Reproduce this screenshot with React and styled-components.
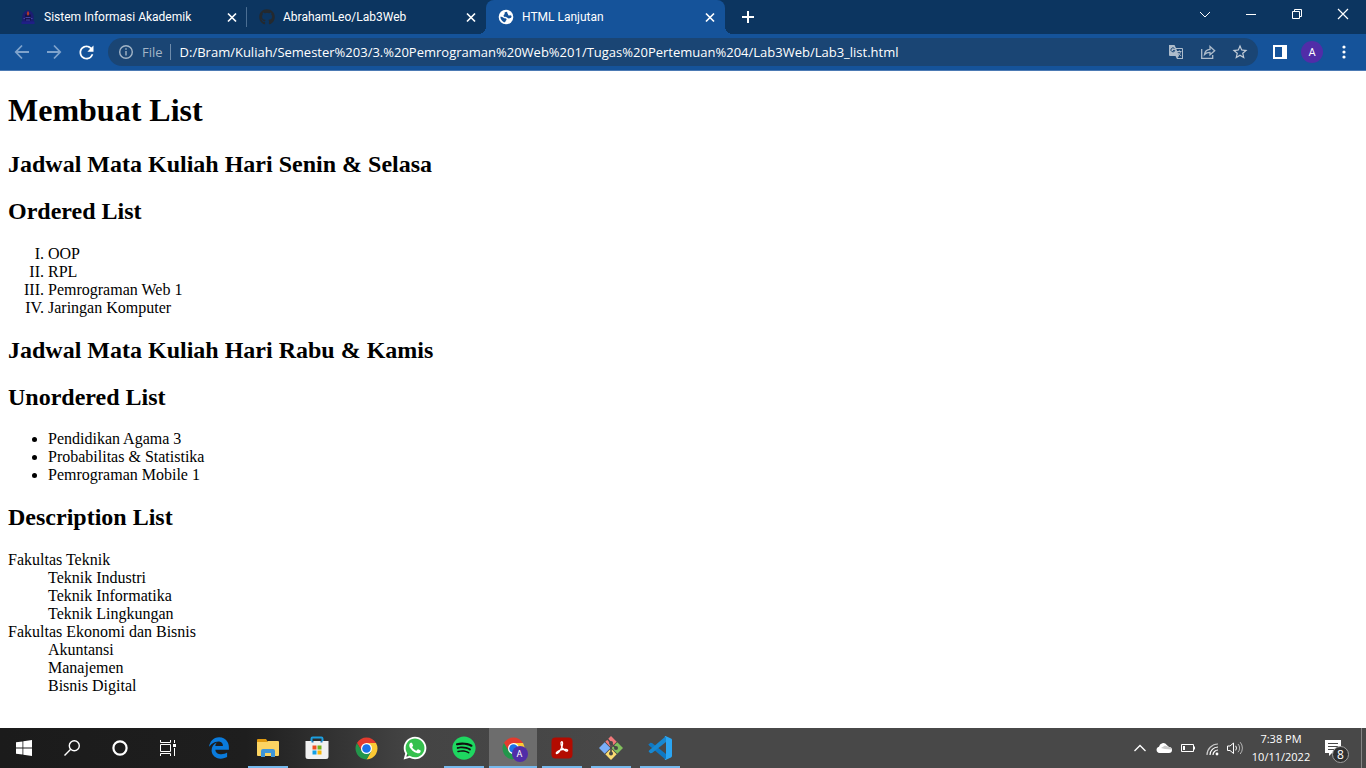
import React from "react";
import styled, { createGlobalStyle, css } from "styled-components";
import { FaGithub, FaSpotify, FaWhatsapp, FaEdgeLegacy } from "react-icons/fa6";
import { MdRefresh, MdStarBorder } from "react-icons/md";

const UI_FONT = `"Open Sans", "Noto Sans", sans-serif`;
const TAB_FONT = `Roboto, "Open Sans", sans-serif`;
const PAGE_FONT = `"Liberation Serif", "Times New Roman", serif`;

const GlobalStyle = createGlobalStyle`
  *, *::before, *::after { box-sizing: border-box; }
  body { margin: 0; background: #fff; }
  button { font: inherit; color: inherit; background: none; border: 0; padding: 0; }
  svg { display: block; flex: none; }
`;

const Screen = styled.div`
  display: flex;
  flex-direction: column;
  min-height: 100vh;
  font-family: ${UI_FONT};
`;

/* ---------- tab strip ---------- */

const TabStrip = styled.header`
  display: flex;
  align-items: flex-start;
  height: 34px;
  padding-left: 8px;
  background: #0c3560;
  color: #fff;
`;

const TabList = styled.nav`
  display: flex;
  height: 34px;
`;

const Tab = styled.div`
  display: flex;
  align-items: center;
  width: 239px;
  height: 34px;
  padding: 0 7px 0 12px;
  border-radius: 8px 8px 0 0;
  ${(p) =>
    p.$divider &&
    css`
      background: linear-gradient(#4b6e93, #4b6e93) right center / 1px 20px no-repeat;
    `}
  ${(p) =>
    p.$active &&
    css`
      position: relative;
      background: #15539a;
      &::before,
      &::after {
        content: "";
        position: absolute;
        bottom: 0;
        width: 8px;
        height: 8px;
      }
      &::before {
        right: 100%;
        background: radial-gradient(circle at 0 0, transparent 8px, #15539a 8px);
      }
      &::after {
        left: 100%;
        background: radial-gradient(circle at 100% 0, transparent 8px, #15539a 8px);
      }
    `}
`;

const TabTitle = styled.button`
  display: flex;
  flex: 1;
  align-items: center;
  gap: 8px;
  font-family: ${TAB_FONT};
  font-size: 12px;
  line-height: 16px;
  white-space: nowrap;
`;

const IconButton = styled.button`
  display: flex;
  flex: none;
  align-items: center;
  justify-content: center;
  width: ${(p) => p.$w || 16}px;
  height: ${(p) => p.$h || 16}px;
  color: ${(p) => p.$color || "#fff"};
`;

const NewTab = styled(IconButton)`
  margin-left: 15px;
`;

const WindowControls = styled.div`
  display: flex;
  margin-left: auto;
`;

/* ---------- toolbar ---------- */

const Toolbar = styled.div`
  display: flex;
  align-items: center;
  height: 37px;
  padding: 0 6px;
  border-bottom: 1px solid #4c7ab4;
  background: #15539a;
`;

const Omnibox = styled.form`
  display: flex;
  flex: 1;
  align-items: center;
  height: 28px;
  margin: 0 6px;
  padding: 0 2px 0 10px;
  border-radius: 14px;
  background: #1a4574;
`;

const Scheme = styled.label`
  margin-left: 8px;
  padding-right: 7px;
  border-right: 1px solid #6f8cab;
  color: #a3b5c7;
  font-size: 13px;
  line-height: 16px;
`;

const Address = styled.input`
  flex: 1;
  min-width: 0;
  margin: 0;
  padding: 0 0 0 9px;
  border: 0;
  outline: 0;
  background: transparent;
  color: #fff;
  font-family: inherit;
  font-size: 13px;
  line-height: 20px;
`;

const Avatar = styled.span`
  display: flex;
  align-items: center;
  justify-content: center;
  width: 22px;
  height: 22px;
  border-radius: 50%;
  background: #512da8;
  color: #fff;
  font-family: Roboto, sans-serif;
  font-size: 11px;
`;

/* ---------- document ---------- */

const Page = styled.main`
  flex: 1;
  padding: 0 8px 16px;
  color: #000;
  font-family: ${PAGE_FONT};
  font-size: 16px;
`;

const Title = styled.h1`
  font-size: 32px;
`;

const Heading = styled.h2`
  font-size: 24px;
`;

const Ordered = styled.ol`
  margin: 16px 0;
  padding-left: 40px;
  list-style-type: upper-roman;
`;

const Unordered = styled.ul`
  margin: 16px 0;
  padding-left: 40px;
`;

const Descriptions = styled.dl`
  margin: 16px 0;
`;

const Detail = styled.dd`
  margin-left: 40px;
`;

/* ---------- taskbar ---------- */

const Taskbar = styled.footer`
  display: flex;
  align-items: stretch;
  height: 40px;
  background: linear-gradient(90deg, #1b1b1b 0, #1e1e1e 18%, #444 30%, #484848 45%, #484848 100%);
  color: #fff;
`;

const System = styled.div`
  display: flex;
  margin-right: 3px;
`;

const Apps = styled.div`
  display: flex;
  gap: 1px;
`;

const TaskButton = styled.button`
  display: flex;
  align-items: center;
  justify-content: center;
  width: 48px;
  height: 40px;
  ${(p) =>
    p.$running &&
    css`
      background: linear-gradient(#76b9ed, #76b9ed) center bottom / 40px 2px no-repeat;
    `}
  ${(p) =>
    p.$active &&
    css`
      background: linear-gradient(#76b9ed, #76b9ed) center bottom / 48px 2px no-repeat, #6d6d6d;
    `}
`;

const Tray = styled.div`
  display: flex;
  align-items: center;
  margin-left: auto;
`;

const Clock = styled.time`
  width: 62px;
  margin: 0 9px 0 4px;
  font-size: 11px;
  line-height: 18px;
  text-align: center;
`;

const ShowDesktop = styled.button`
  width: 5px;
  height: 40px;
  margin-left: 16px;
  border-left: 1px solid #858585;
`;

const Badged = styled.span`
  position: relative;
  display: flex;
`;

const Count = styled.span`
  position: absolute;
  top: 6px;
  left: 7px;
  width: 17px;
  height: 17px;
  border: 1px solid #a0a0a0;
  border-radius: 50%;
  background: #303030;
  font-size: 12px;
  line-height: 15px;
  text-align: center;
`;

const MiniAvatar = styled(Avatar)`
  position: absolute;
  top: 9px;
  left: 10px;
  width: 16px;
  height: 16px;
  font-size: 9px;
`;

/* ---------- drawings ---------- */

const Stroke = ({ w = 16, h = 16, sw = 1, d, children, ...rest }) => (
  <svg width={w} height={h} viewBox={`0 0 ${w} ${h}`} fill="none" stroke="currentColor" strokeWidth={sw} {...rest}>
    {d && <path d={d} />}
    {children}
  </svg>
);

const CloseX = () => <Stroke sw={1.7} d="M4 4.500l8 8M12 4.500l-8 8" />;

const CampusIcon = () => (
  <svg width="16" height="16" viewBox="0 0 16 16">
    <path d="M8 1C4.500 2 2.300 4.500 2.300 8v6h11.400V8C13.700 4.500 11.500 2 8 1Z" fill="#1c1c72" />
    <path d="M5 5.500h6v6H5z" fill="#14144e" />
    <path d="M1.500 12.500h13V15h-13z" fill="#1f1f86" />
    <path d="M7.400 2.500h1.300l.6 2.500-.8 1.500h-1L6.800 5z" fill="#b23a2a" />
    <path d="M5.500 8.500h5M6 11h4M3.500 9.500h1.500M11 9.500h1.500" stroke="#4444a4" />
  </svg>
);

const GlobeIcon = () => (
  <svg width="16" height="16" viewBox="0 0 16 16">
    <circle cx="8" cy="8" r="7.300" fill="#fff" />
    <path d="M9 2.700C6.500 3 5.800 4 7 5c-1.300.6-1.900 1.500-1 2.400 1 .9 2.600.3 3.400 1.300.6.900 2 .900 2.800.4.900-.3 1.400-1 1.300-2.200-.5-.7-1.300-.9-1.900-.5-.8.200-1.500-.2-1.500-1 0-.9-1.200-.8-1-1.500.2-.5.400-.9-.1-1.200z" fill="#15539a" />
    <path d="M2.300 7.800c1.400 0 2.300.2 3.200.9.900.8 2.400.2 3 1.300.4 1.100-.8 1.300-1 2.200-.100.600-.700 1.200-1.500 1-2-.9-3.500-2.900-3.700-5.400z" fill="#15539a" />
  </svg>
);

const ChromeLogo = () => (
  <svg width="23" height="23" viewBox="1 1 46 46">
    <path d="M4.950 13A22 22 0 0 1 43.050 13H24v11l-9.500 5.500Z" fill="#e33b2e" />
    <path d="M43.050 13A22 22 0 0 1 24 46l9.500-16.500L24 24V13Z" fill="#fcc934" />
    <path d="M24 46A22 22 0 0 1 4.950 13l9.550 16.500L24 24l9.500 5.500Z" fill="#23964b" />
    <circle cx="24" cy="24" r="11" fill="#fff" />
    <circle cx="24" cy="24" r="8.600" fill="#1a73e8" />
  </svg>
);

const WindowsLogo = () => (
  <svg width="16" height="16" viewBox="0 0 16 16" fill="#fff">
    <path d="M0 2.300L6.500 1.400V7.500H0zM7.300 1.300L16 0v7.500H7.300zM0 8.400h6.500v6.200L0 13.700zM7.300 8.400H16V16l-8.700-1.300z" />
  </svg>
);

const FolderLogo = () => (
  <svg width="22" height="20" viewBox="0 0 22 20">
    <path d="M0 2a1 1 0 0 1 1-1h8l2 3H0z" fill="#e09a10" />
    <path d="M0 4h10l1-1h10a1 1 0 0 1 1 1v13a1 1 0 0 1-1 1H1a1 1 0 0 1-1-1z" fill="#fcd462" />
    <path d="M4 19v-6a2 2 0 0 1 2-2h10a2 2 0 0 1 2 2v6h-4v-4H8v4z" fill="#3f96d9" />
  </svg>
);

const StoreLogo = () => (
  <svg width="24" height="24" viewBox="0 0 24 24">
    <path d="M6.500 6V2.700C6.500 2 7 1.600 7.600 1.600h8.800c.6 0 1.100.4 1.100 1.100V6" fill="none" stroke="#1c9fe0" strokeWidth="2" />
    <path d="M.5 5h23v15.500a2.500 2.500 0 0 1-2.500 2.500H3A2.500 2.500 0 0 1 .5 20.500z" fill="#f1f1f1" />
    <path d="M6.500 5h2v1.500h-2zM15.500 5h2v1.500h-2z" fill="#1c7fc0" />
    <path d="M7.500 9.500h4v4h-4z" fill="#f04e1f" />
    <path d="M12.500 9.500h4v4h-4z" fill="#72b21b" />
    <path d="M7.500 14.500h4v4h-4z" fill="#12a0e6" />
    <path d="M12.500 14.500h4v4h-4z" fill="#f8b509" />
  </svg>
);

const WhatsAppLogo = () => (
  <svg width="26" height="26" viewBox="0 0 26 26">
    <circle cx="13.300" cy="12.800" r="10.500" fill="#35c04d" />
    <FaWhatsapp size={26} color="#fff" />
  </svg>
);

const SpotifyLogo = () => (
  <svg width="24" height="24" viewBox="0 0 24 24">
    <circle cx="12" cy="12" r="10" fill="#101010" />
    <FaSpotify size={24} color="#1ed760" />
  </svg>
);

const AcrobatLogo = () => (
  <svg width="22" height="22" viewBox="0 0 22 22">
    <rect x="0.500" y="0.500" width="21" height="21" rx="4" fill="#b30b00" />
    <path
      d="M10.500 4.800c1.700-.6 1.200 4-.4 7-1.300 2.500-3.500 5.200-4.600 4.600-1.200-.9 2.200-3 5.600-3.700 3-.6 5.700-.4 5.500.9-.3 1.400-3.800-.4-5.300-2.700-1.200-2-1.900-5.700-.8-6.100z"
      fill="none"
      stroke="#fff"
      strokeWidth="1.300"
    />
  </svg>
);

const GitLogo = () => (
  <svg width="24" height="24" viewBox="0 0 24 24">
    <path d="M12 0l5.700 5.700L12 11.400 6.300 5.700z" fill="#f0787a" />
    <path d="M18.300 6.300L24 12l-5.700 5.700-5.700-5.700z" fill="#82c05d" />
    <path d="M12 12.600l5.700 5.700L12 24l-5.700-5.700z" fill="#fbdc72" />
    <path d="M5.700 6.300l5.700 5.700-5.700 5.700L0 12z" fill="#7aaef8" />
    <path d="M8.500 3l3.500 4v11M12 7.500l5 4.500" fill="none" stroke="#474747" strokeWidth="1.600" />
    <circle cx="12" cy="7" r="2" fill="#474747" />
    <circle cx="17" cy="12" r="2" fill="#474747" />
    <circle cx="12" cy="17.500" r="2" fill="#474747" />
  </svg>
);

const CodeLogo = () => (
  <svg width="24" height="24" viewBox="0 0 24 24">
    <path d="M0.800 8.200L2.300 6.800 4 6.900 18 18v6L0.800 9.300z" fill="#0f79c4" />
    <path d="M0.800 15.800l1.500 1.400L4 17.100 18 6V0L0.800 14.700z" fill="#1788d1" />
    <path d="M17.500 0L23 2.600a1.500 1.500 0 0 1 1 1.400v16a1.500 1.500 0 0 1-1 1.400L17.500 24c-.5.200-.8-.1-.8-.4l1.300-1.200V1.600L16.700.4c0-.3.3-.6.8-.4z" fill="#2aa5f2" />
  </svg>
);

const tabs = [
  { title: "Sistem Informasi Akademik", icon: <CampusIcon />, divider: true },
  { title: "AbrahamLeo/Lab3Web", icon: <FaGithub size={16} color="#24292e" /> },
  { title: "HTML Lanjutan", icon: <GlobeIcon />, active: true },
];

const apps = [
  { name: "Microsoft Edge", icon: <FaEdgeLegacy size={22} color="#0a7bdc" /> },
  { name: "File Explorer", icon: <FolderLogo />, running: true },
  { name: "Microsoft Store", icon: <StoreLogo /> },
  { name: "Google Chrome", icon: <ChromeLogo /> },
  { name: "WhatsApp", icon: <WhatsAppLogo /> },
  { name: "Spotify", icon: <SpotifyLogo />, running: true },
  {
    name: "Chrome profile",
    icon: (
      <Badged>
        <ChromeLogo />
        <MiniAvatar>A</MiniAvatar>
      </Badged>
    ),
    active: true,
  },
  { name: "Adobe Acrobat", icon: <AcrobatLogo />, running: true },
  { name: "Git Bash", icon: <GitLogo />, running: true },
  { name: "Visual Studio Code", icon: <CodeLogo />, running: true },
];

const faculties = [
  { name: "Fakultas Teknik", majors: ["Teknik Industri", "Teknik Informatika", "Teknik Lingkungan"] },
  { name: "Fakultas Ekonomi dan Bisnis", majors: ["Akuntansi", "Manajemen", "Bisnis Digital"] },
];

export default function App() {
  return (
    <Screen>
      <GlobalStyle />
      <TabStrip>
        <TabList>
          {tabs.map((t) => (
            <Tab key={t.title} $active={t.active} $divider={t.divider}>
              <TabTitle>
                {t.icon}
                {t.title}
              </TabTitle>
              <IconButton aria-label={`Close ${t.title}`}>
                <CloseX />
              </IconButton>
            </Tab>
          ))}
        </TabList>
        <NewTab aria-label="New tab" $h={34}>
          <Stroke sw={2} d="M8 2v12M2 8h12" />
        </NewTab>
        <WindowControls>
          <IconButton aria-label="Search tabs" $w={46} $h={28}>
            <Stroke d="M3 6l5 5 5-5" />
          </IconButton>
          <IconButton aria-label="Minimize" $w={46} $h={28}>
            <Stroke d="M3 8.500h10" />
          </IconButton>
          <IconButton aria-label="Restore" $w={46} $h={28}>
            <Stroke d="M3.500 5.500h7v7h-7zM5.500 5.500v-2h7v7h-2" />
          </IconButton>
          <IconButton aria-label="Close window" $w={46} $h={28}>
            <Stroke sw={1.200} d="M3 3l10 10M13 3L3 13" />
          </IconButton>
        </WindowControls>
      </TabStrip>

      <Toolbar>
        <IconButton aria-label="Back" $w={32} $h={28} $color="#7fa3cc">
          <Stroke sw={1.800} d="M15 8H2M8 1.500L1.800 8 8 14.500" />
        </IconButton>
        <IconButton aria-label="Forward" $w={32} $h={28} $color="#7fa3cc">
          <Stroke sw={1.800} d="M1 8h13M8 1.500L14.200 8 8 14.500" />
        </IconButton>
        <IconButton aria-label="Reload" $w={32} $h={28}>
          <MdRefresh size={21} />
        </IconButton>
        <Omnibox>
          <IconButton type="button" aria-label="Site information" $color="#a3b5c7">
            <Stroke sw={1.400}>
              <circle cx="8" cy="8" r="6.300" />
              <path d="M8 7v4.500M8 4.300v1.500" />
            </Stroke>
          </IconButton>
          <Scheme htmlFor="address">File</Scheme>
          <Address
            id="address"
            defaultValue="D:/Bram/Kuliah/Semester%203/3.%20Pemrograman%20Web%201/Tugas%20Pertemuan%204/Lab3Web/Lab3_list.html"
          />
          <IconButton type="button" aria-label="Translate" $w={32} $h={28} $color="#aebccb">
            <svg width="16" height="16" viewBox="0 0 16 16">
              <path d="M1 1h5.500L8 4h6a1 1 0 0 1 1 1v9.500a.5.500 0 0 1-.5.500H9l-1.500-3H2a1 1 0 0 1-1-1z" fill="#aebccb" />
              <path d="M8.300 5H14v9H9.600l1.400-2.200z" fill="#1a4574" />
              <path d="M9 7.500h4.500M11.300 6.300v1.200M10 11.500c1.500-1 2.200-2.200 2.500-4M10 8.500c.6 1.500 1.800 2.600 3.200 3.300" stroke="#aebccb" fill="none" />
              <path d="M6.500 4.600a2 2 0 1 0 .3 2H5" stroke="#1a4574" fill="none" />
            </svg>
          </IconButton>
          <IconButton type="button" aria-label="Share" $w={32} $h={28} $color="#aebccb">
            <Stroke sw={1.300} d="M1.700 5v9.300h11V11M4.500 10.500C5 7 7 5.500 10 5.300V2.500l4.700 4.300L10 10.800V8.300c-2.500 0-4 .5-5.500 2.200z" />
          </IconButton>
          <IconButton type="button" aria-label="Bookmark" $w={32} $h={28} $color="#c3cdd8">
            <MdStarBorder size={18} />
          </IconButton>
        </Omnibox>
        <IconButton aria-label="Side panel" $w={32} $h={28}>
          <svg width="14" height="14" viewBox="0 0 14 14">
            <path d="M0 0h14v14H0zM2 2v10h7V2z" fill="#fff" fillRule="evenodd" />
          </svg>
        </IconButton>
        <IconButton aria-label="Profile" $w={32} $h={28}>
          <Avatar>A</Avatar>
        </IconButton>
        <IconButton aria-label="Menu" $w={32} $h={28}>
          <svg width="4" height="14" viewBox="0 0 4 14" fill="#fff">
            <circle cx="2" cy="2" r="1.600" />
            <circle cx="2" cy="7" r="1.600" />
            <circle cx="2" cy="12" r="1.600" />
          </svg>
        </IconButton>
      </Toolbar>

      <Page>
        <Title>Membuat List</Title>
        <Heading>Jadwal Mata Kuliah Hari Senin &amp; Selasa</Heading>
        <Heading>Ordered List</Heading>
        <Ordered>
          <li>OOP</li>
          <li>RPL</li>
          <li>Pemrograman Web 1</li>
          <li>Jaringan Komputer</li>
        </Ordered>
        <Heading>Jadwal Mata Kuliah Hari Rabu &amp; Kamis</Heading>
        <Heading>Unordered List</Heading>
        <Unordered>
          <li>Pendidikan Agama 3</li>
          <li>Probabilitas &amp; Statistika</li>
          <li>Pemrograman Mobile 1</li>
        </Unordered>
        <Heading>Description List</Heading>
        <Descriptions>
          {faculties.map((f) => (
            <React.Fragment key={f.name}>
              <dt>{f.name}</dt>
              {f.majors.map((m) => (
                <Detail key={m}>{m}</Detail>
              ))}
            </React.Fragment>
          ))}
        </Descriptions>
      </Page>

      <Taskbar>
        <System>
          <TaskButton aria-label="Start">
            <WindowsLogo />
          </TaskButton>
          <TaskButton aria-label="Search">
            <Stroke sw={1.400}>
              <circle cx="10.300" cy="5.700" r="5" />
              <path d="M6.700 9.300L0.500 15.500" />
            </Stroke>
          </TaskButton>
          <TaskButton aria-label="Cortana">
            <Stroke sw={2.200}>
              <circle cx="8" cy="8" r="6.600" />
            </Stroke>
          </TaskButton>
          <TaskButton aria-label="Task view">
            <Stroke d="M0.500 0v2.500h10V0M0.500 16v-2.500h10V16M0.500 4.500h10v7h-10zM14.500 0v3M14.500 8v8">
              <path d="M13 4h3v3h-3z" fill="#fff" stroke="none" />
            </Stroke>
          </TaskButton>
        </System>
        <Apps>
          {apps.map((a) => (
            <TaskButton key={a.name} aria-label={a.name} $running={a.running} $active={a.active}>
              {a.icon}
            </TaskButton>
          ))}
        </Apps>
        <Tray>
          <IconButton aria-label="Show hidden icons" $w={24} $h={40}>
            <Stroke sw={1.300} d="M2.500 11L8 5.500l5.500 5.500" />
          </IconButton>
          <IconButton aria-label="OneDrive" $w={24} $h={40}>
            <svg width="16" height="16" viewBox="0 0 16 16">
              <path d="M3.500 13A3.200 3.200 0 0 1 3 6.700 4.300 4.300 0 0 1 10.800 5L13 7a3 3 0 0 1 0 6z" fill="#fff" />
              <path d="M5 8l4-2.500L13 7a3 3 0 0 1 2.500 2.500L9 9z" fill="#c9c9c9" />
            </svg>
          </IconButton>
          <IconButton aria-label="Battery" $w={24} $h={40}>
            <Stroke d="M1.500 4.500h12v7h-12zM14.500 6.500v3">
              <path d="M3 6h2v4H3z" fill="#fff" stroke="none" />
            </Stroke>
          </IconButton>
          <IconButton aria-label="Network" $w={24} $h={40}>
            <Stroke sw={1.200}>
              <path d="M3 15A11 11 0 0 1 14 4" opacity="0.700" />
              <path d="M6 15a8 8 0 0 1 8-8M9 15a5 5 0 0 1 5-5" />
              <circle cx="13" cy="14" r="1.400" fill="#fff" stroke="none" />
            </Stroke>
          </IconButton>
          <IconButton aria-label="Volume" $w={22} $h={40}>
            <Stroke>
              <path d="M0.500 6h2.500l3.500-3v10.500L3 10.500H0.500zM8.700 5.800a4 4 0 0 1 0 4.600" />
              <path d="M11 4a6 6 0 0 1 0 8.200M13.200 2.200a9 9 0 0 1 0 11.800" opacity="0.600" />
            </Stroke>
          </IconButton>
          <Clock dateTime="2022-10-11T19:38">
            7:38 PM
            <br />
            10/11/2022
          </Clock>
          <IconButton aria-label="Notifications" $w={24} $h={40}>
            <Badged>
              <svg width="16" height="16" viewBox="0 0 16 16">
                <path d="M0 0h16v13H7l-3 3v-3H0z" fill="#fff" />
                <path d="M3 3.500h10M3 6.500h10M3 9.500h6" stroke="#484848" />
              </svg>
              <Count>8</Count>
            </Badged>
          </IconButton>
          <ShowDesktop aria-label="Show desktop" />
        </Tray>
      </Taskbar>
    </Screen>
  );
}
